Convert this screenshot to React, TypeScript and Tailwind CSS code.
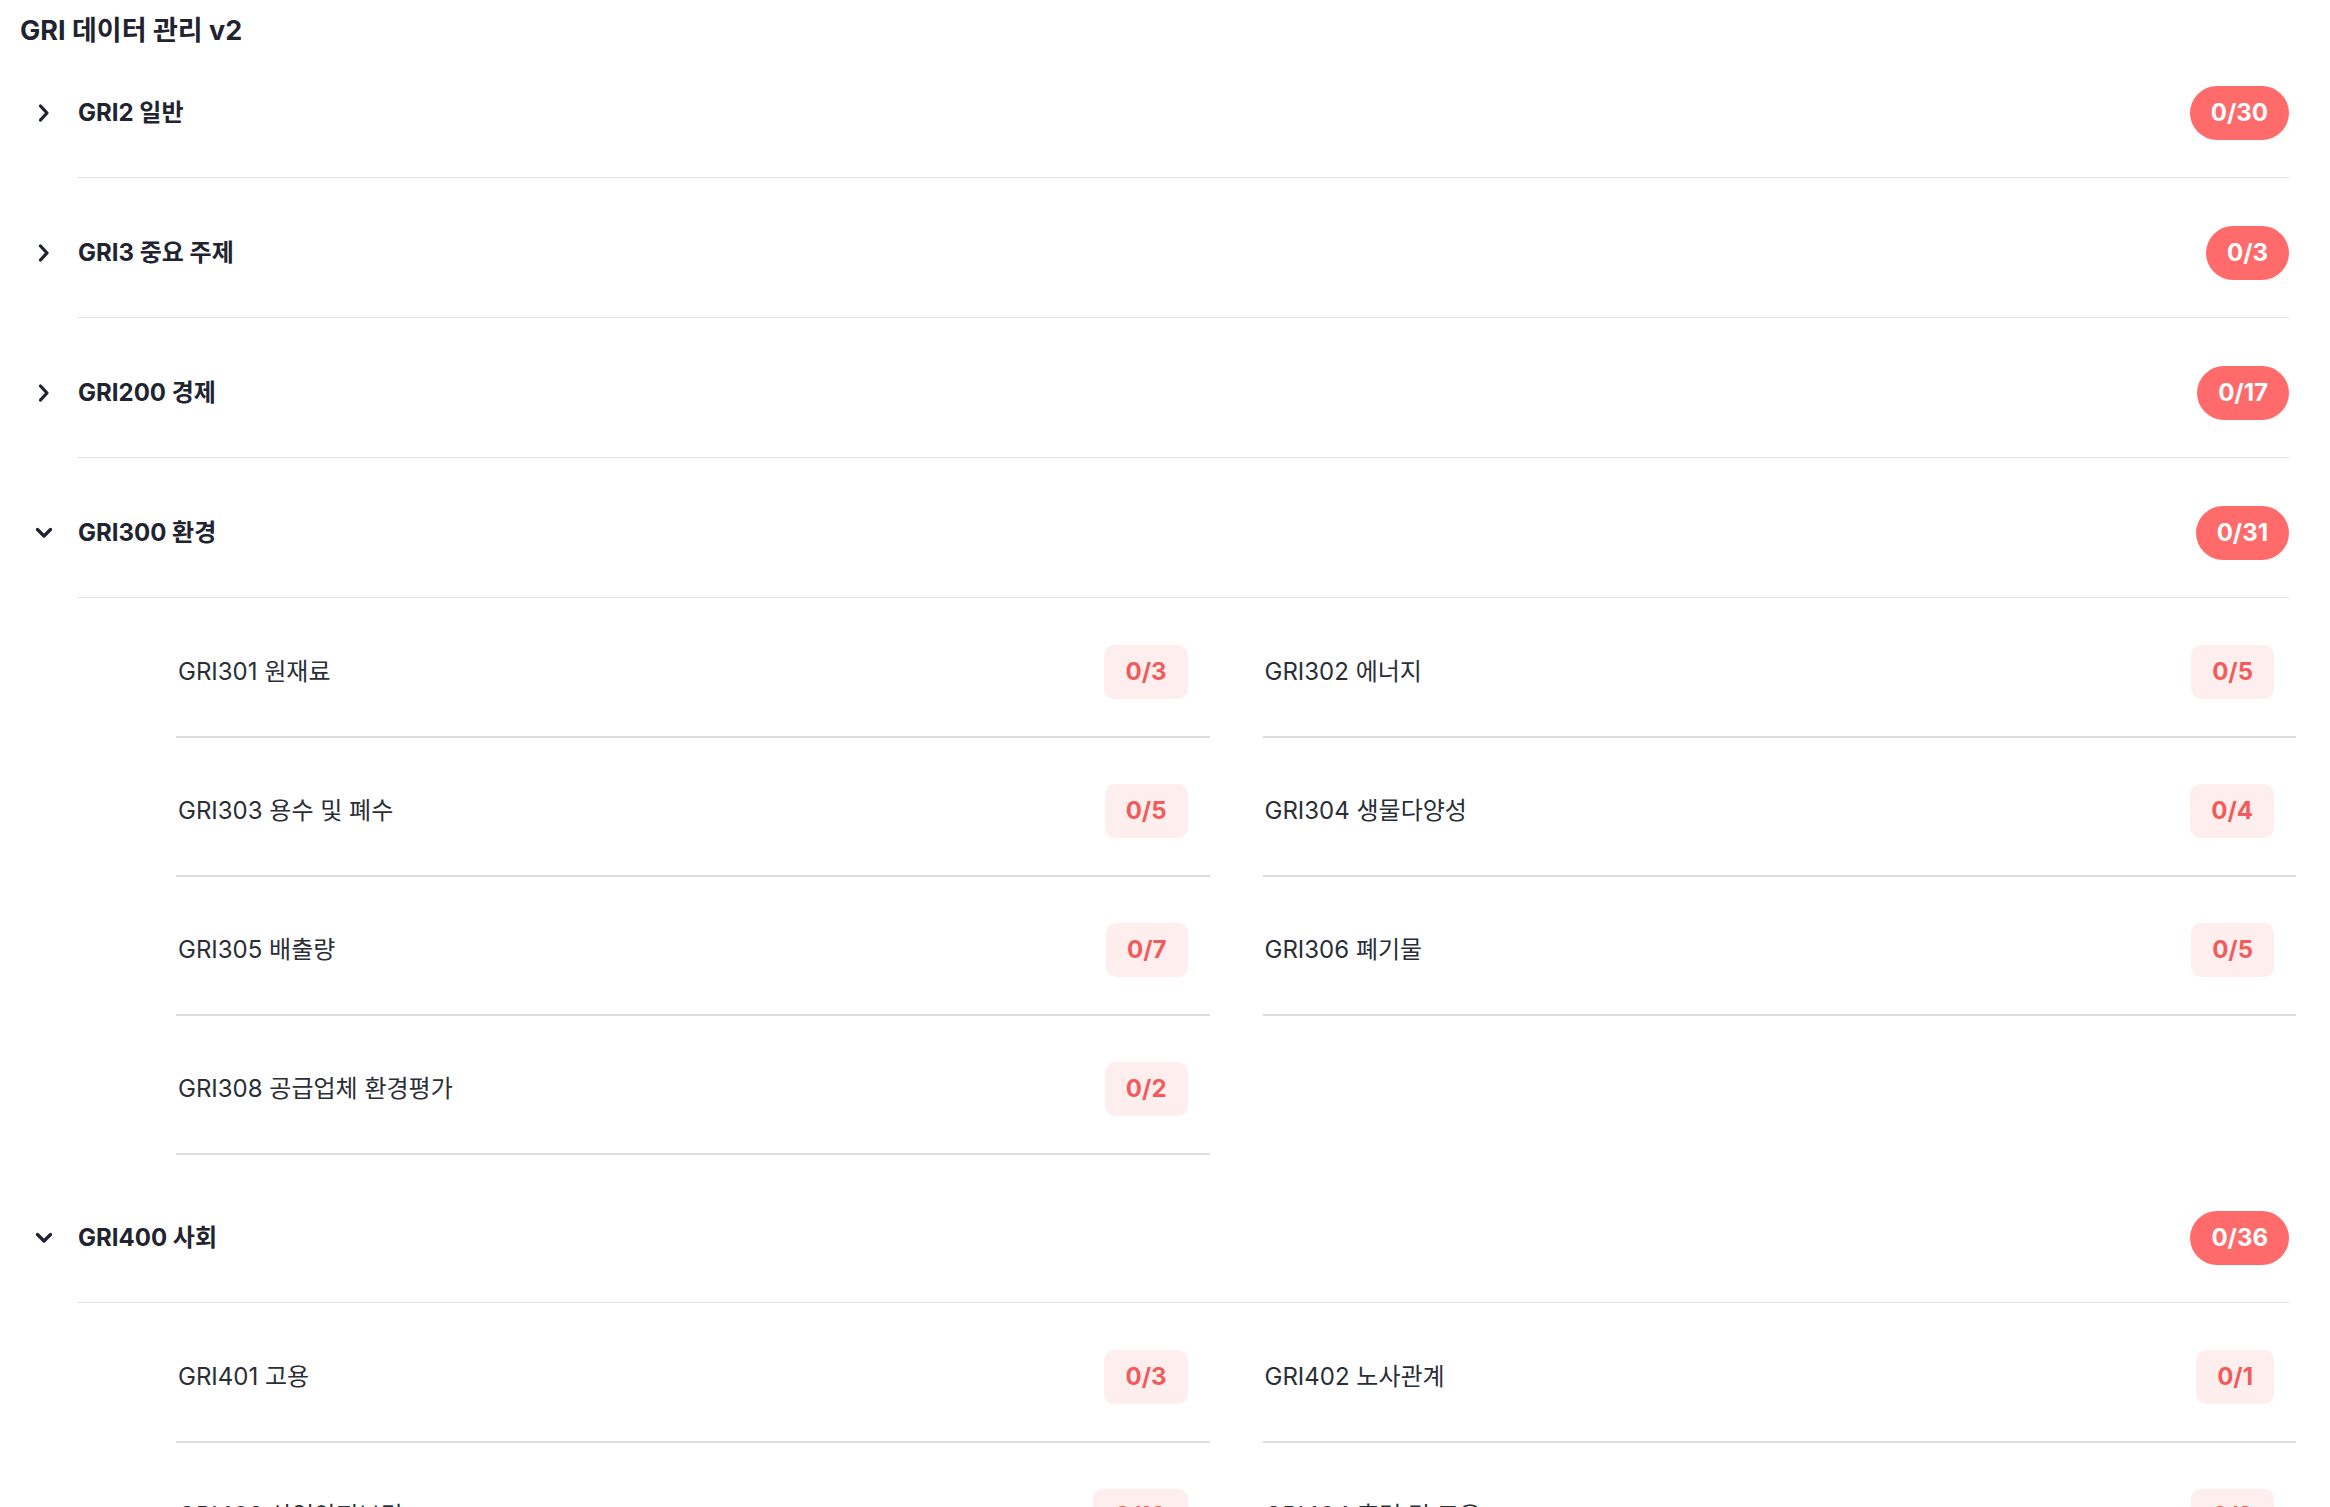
import { useState } from "react";

type SubItem = {
  code: string;
  name: string;
  done: number;
  total: number;
};

type Section = {
  code: string;
  name: string;
  done: number;
  total: number;
  items: SubItem[];
};

const SECTIONS: Section[] = [
  { code: "GRI2", name: "일반", done: 0, total: 30, items: [] },
  { code: "GRI3", name: "중요 주제", done: 0, total: 3, items: [] },
  { code: "GRI200", name: "경제", done: 0, total: 17, items: [] },
  {
    code: "GRI300",
    name: "환경",
    done: 0,
    total: 31,
    items: [
      { code: "GRI301", name: "원재료", done: 0, total: 3 },
      { code: "GRI302", name: "에너지", done: 0, total: 5 },
      { code: "GRI303", name: "용수 및 폐수", done: 0, total: 5 },
      { code: "GRI304", name: "생물다양성", done: 0, total: 4 },
      { code: "GRI305", name: "배출량", done: 0, total: 7 },
      { code: "GRI306", name: "폐기물", done: 0, total: 5 },
      { code: "GRI308", name: "공급업체 환경평가", done: 0, total: 2 }
    ]
  },
  {
    code: "GRI400",
    name: "사회",
    done: 0,
    total: 36,
    items: [
      { code: "GRI401", name: "고용", done: 0, total: 3 },
      { code: "GRI402", name: "노사관계", done: 0, total: 1 },
      { code: "GRI403", name: "산업안전보건", done: 0, total: 10 },
      { code: "GRI404", name: "훈련 및 교육", done: 0, total: 3 }
    ]
  }
];

const FONT = { fontFamily: 'Inter, "Noto Sans CJK KR", sans-serif' };

function Chevron({ open }: { open: boolean }) {
  return (
    <svg width="20" height="20" viewBox="0 0 20 20" fill="none">
      <path
        d={open ? "M3.5 6.5 L10 13 L16.5 6.5" : "M6.5 3 L13 10 L6.5 17"}
        stroke="#1f2430"
        strokeWidth="3.3"
        strokeLinecap="round"
        strokeLinejoin="round"
      />
    </svg>
  );
}

function SubRow({ item }: { item: SubItem }) {
  return (
    <div className="flex items-center justify-between pt-[46px] pb-[37px] pr-[22px] border-b-2 border-[#dcdcdc]">
      <span className="pl-[2px] text-[24px] leading-none text-[#2a2e36]">
        {item.code} {item.name}
      </span>
      <span className="flex h-[54px] items-center rounded-[10px] bg-[#ffeeee] px-[21px] text-[24px] font-bold leading-none text-[#f25b5b]">
        {item.done}/{item.total}
      </span>
    </div>
  );
}

export default function App() {
  const [open, setOpen] = useState<Record<string, boolean>>({
    GRI300: true,
    GRI400: true
  });

  const toggle = (code: string) =>
    setOpen(prev => ({ ...prev, [code]: !prev[code] }));

  return (
    <div className="h-screen overflow-hidden bg-white px-[20px]" style={FONT}>
      <h1 className="h-[38px] pt-[14px] text-[27px] font-bold leading-[34px] text-[#1f2430]">
        GRI 데이터 관리 v2
      </h1>

      {SECTIONS.map(section => {
        const isOpen = !!open[section.code];
        return (
          <div key={section.code}>
            <div
              className="flex cursor-pointer"
              onClick={() => toggle(section.code)}
            >
              <div className="ml-[14px] mr-[24px] mt-[48px] flex h-[54px] w-[20px] items-center">
                <Chevron open={isOpen} />
              </div>
              <div className="mr-[21px] flex flex-1 items-center justify-between border-b border-[#e2e2e2] pt-[48px] pb-[37px]">
                <span className="text-[24px] font-bold leading-none text-[#1f2430]">
                  {section.code} {section.name}
                </span>
                <span className="flex h-[54px] items-center rounded-full bg-[#ff6b6b] px-[21px] text-[24px] font-bold leading-none text-white">
                  {section.done}/{section.total}
                </span>
              </div>
            </div>

            {isOpen && section.items.length > 0 && (
              <div className="ml-[156px] mr-[14px] grid grid-cols-2 gap-x-[53px] pt-[1px] pb-[8px]">
                {section.items.map(item => (
                  <SubRow key={item.code} item={item} />
                ))}
              </div>
            )}
          </div>
        );
      })}
    </div>
  );
}
